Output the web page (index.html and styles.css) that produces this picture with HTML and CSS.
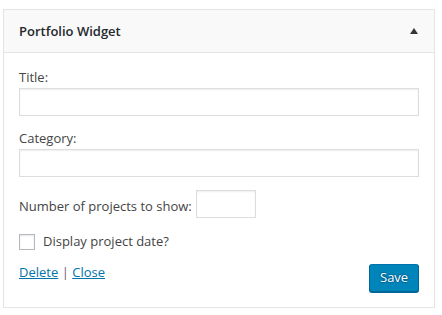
FILE: index.html
```html
<!DOCTYPE html>
<html>
<head>
<meta charset="utf-8">
<link rel="stylesheet" href="styles.css">
</head>
<body>
<div class="widget">
  <div class="widget-top">
    <h3 class="widget-title">Portfolio Widget</h3>
    <svg class="toggle" width="8" height="6" viewBox="0 0 8 6"><path d="M4 0 L8 6 L0 6 Z" fill="#32373c"/></svg>
  </div>
  <div class="widget-inside">
    <div class="field">
      <label class="label">Title:</label>
      <input class="text-input" type="text">
    </div>
    <div class="field">
      <label class="label">Category:</label>
      <input class="text-input" type="text">
    </div>
    <div class="number-row">
      <label class="number-label">Number of projects to show:</label>
      <input class="number-input" type="text">
    </div>
    <div class="check-row">
      <span class="checkbox"></span>
      <span class="check-label">Display project date?</span>
    </div>
    <div class="actions">
      <div class="links"><a href="#" class="link">Delete</a> <span class="sep">|</span> <a href="#" class="link">Close</a></div>
      <button class="save">Save</button>
    </div>
  </div>
</div>
</body>
</html>
```
FILE: styles.css
```css
html, body {
  margin: 0;
  padding: 0;
  background: #fff;
}
body {
  font-family: "Open Sans", "Liberation Sans", sans-serif;
  font-size: 13px;
  line-height: 18px;
  color: #444;
  padding: 9px 7px 0 3px;
}
.widget {
  border: 1px solid #e5e5e5;
  background: #fff;
  box-shadow: 0 1px 1px rgba(0,0,0,0.04);
}
.widget-top {
  height: 42px;
  background: #f9f9f9;
  border-bottom: 1px solid #e5e5e5;
  display: flex;
  align-items: center;
  justify-content: space-between;
  padding: 0 16px 0 15px;
}
.widget-title {
  margin: 0;
  font-size: 13px;
  font-weight: 600;
  color: #23282d;
  line-height: 18px;
}
.toggle {
  display: block;
  margin-top: -1px;
}
.widget-inside {
  padding: 2px 15px 15px;
}
.field {
  margin-top: 13px;
  display: flex;
  flex-direction: column;
}
.label {
  display: block;
  height: 18px;
}
.text-input {
  margin: 2px 0 0;
  box-sizing: border-box;
  width: 100%;
  height: 28px;
  border: 1px solid #ddd;
  box-shadow: inset 0 1px 2px rgba(0,0,0,0.07);
  background: #fff;
  padding: 3px 5px;
  font: inherit;
  outline: none;
}
.number-row {
  margin-top: 13px;
  display: flex;
  align-items: center;
}
.number-label {
  padding-top: 3px;
}
.number-input {
  margin: 0 0 0 4px;
  box-sizing: border-box;
  width: 60px;
  height: 28px;
  border: 1px solid #ddd;
  box-shadow: inset 0 1px 2px rgba(0,0,0,0.07);
  background: #fff;
  font: inherit;
  outline: none;
}
.check-row {
  margin-top: 14px;
  display: flex;
  align-items: center;
  height: 18px;
}
.checkbox {
  box-sizing: border-box;
  width: 16px;
  height: 16px;
  border: 1px solid #b4b9be;
  background: #fff;
  box-shadow: inset 0 1px 2px rgba(0,0,0,0.1);
  margin-top: 2px;
}
.check-label {
  margin-left: 8px;
}
.actions {
  margin-top: 13px;
  display: flex;
  justify-content: space-between;
  align-items: flex-start;
}
.link {
  color: #0073aa;
  text-decoration: underline;
}
.sep {
  color: #666;
}
.save {
  margin-top: 1px;
  width: 50px;
  height: 28px;
  box-sizing: border-box;
  background: #0085ba;
  border: 1px solid #0073aa;
  border-color: #0073aa #006799 #006799;
  border-radius: 3px;
  box-shadow: 0 1px 0 #006799;
  color: #fff;
  font: inherit;
  text-shadow: 0 -1px 1px #006799, 1px 0 1px #006799, 0 1px 1px #006799, -1px 0 1px #006799;
  padding: 0 10px 2px;
}
```
